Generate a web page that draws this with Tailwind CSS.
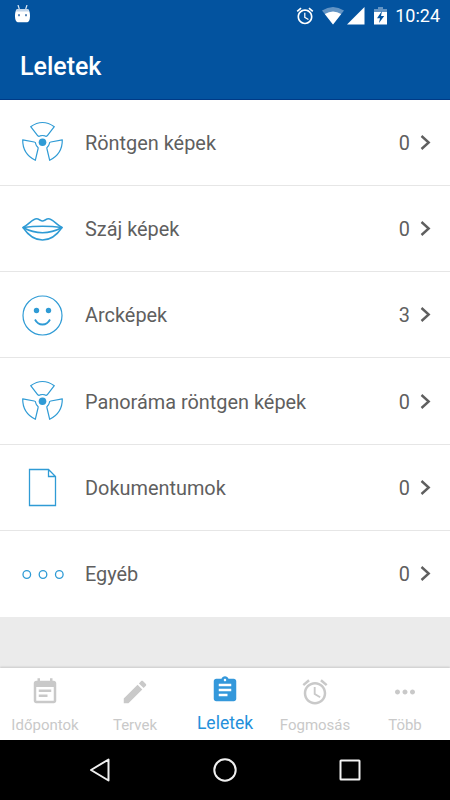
<!DOCTYPE html>
<html lang="hu">
<head>
  <meta charset="UTF-8" />
  <meta name="viewport" content="width=device-width, initial-scale=1.0"/>
  <title>Leletek</title>
  <script src="https://cdn.jsdelivr.net/npm/@tailwindcss/browser@4"></script>
</head>
<body class="bg-black font-['Roboto',sans-serif]">
  <div class="w-[450px] h-[800px] flex flex-col overflow-hidden bg-[#ebebeb]">

    <header class="h-[100px] shrink-0 bg-[#03539f] border-b border-[#003a86] text-white">
      <!-- Status bar -->
      <div class="h-8 flex items-center justify-between pl-[14px] pr-[10px]">
        <svg class="w-[17px] h-[18px] -mt-1" viewBox="0 0 17 18">
          <path d="M4 0l1.300 4M13 0l-1.300 4" stroke="#dfe9f4" stroke-width="1.200"/>
          <path d="M3 4h11c1.300 1.500 2 3.500 2 6.500 0 2-.2 4-1 5.500-.6 1-1.500 1.300-2.500 1.300h-8C3.500 17.300 2.600 17 2 16c-.8-1.500-1-3.500-1-5.500C1 7.500 1.700 5.500 3 4z" fill="#fff"/>
          <path d="M3 4h11l1.200 2.600H1.800z" fill="#c3d6ea"/>
          <rect x="4" y="9.200" width="2" height="2" fill="#5a87b9"/><rect x="11" y="9.200" width="2" height="2" fill="#5a87b9"/>
        </svg>
        <div class="flex items-center">
          <svg class="w-[20px] h-[20px] mr-[7px] -mt-px" viewBox="0 0 24 24" fill="#fff">
            <path d="M22 5.720l-4.600-3.860-1.290 1.530 4.600 3.860L22 5.720zM7.880 3.390L6.600 1.860 2 5.710l1.290 1.530 4.590-3.850zM12.500 8H11v6l4.750 2.850.75-1.230-4-2.370V8zM12 4c-4.970 0-9 4.030-9 9s4.020 9 9 9c4.970 0 9-4.030 9-9s-4.030-9-9-9zm0 16c-3.870 0-7-3.130-7-7s3.130-7 7-7 7 3.130 7 7-3.130 7-7 7z"/>
          </svg>
          <svg class="w-[22px] h-[18px] mr-[3px] -mt-px" viewBox="0 0 22 18">
            <path d="M0 3.500Q11-3.500 22 3.500L11 17.500z" fill="#6394c4"/>
            <path d="M2.800 7Q11 2 19.200 7L11 17.500z" fill="#fff"/>
          </svg>
          <svg class="w-[18px] h-[18px] mr-[9px] -mt-px" viewBox="0 0 18 18"><path d="M0 17.500L17.500 0V17.500z" fill="#fff"/></svg>
          <svg class="w-[13px] h-[18px] mr-[8px] -mt-px" viewBox="0 0 13 18">
            <path d="M4 0h5v2h4v4H0V2h4z" fill="#6394c4"/>
            <path d="M0 5h13v12.500H0z" fill="#fff"/>
            <path d="M8 4L3 11.200h3L5 16l5.200-7H7z" fill="#03539f"/>
          </svg>
          <span class="text-[18px] leading-8">10:24</span>
        </div>
      </div>
      <h1 class="pl-5 pt-[17px] text-[25px] leading-9 font-medium">Leletek</h1>
    </header>

    <main class="h-[517px] shrink-0 grid grid-rows-6 bg-white text-[19.9px] text-[#5f5f5f]">
      <div class="flex items-center pl-[21px] pr-[19px] border-b border-[#e6e6e6]">
        <svg class="w-[43px] h-[43px]" viewBox="0 0 43 43" fill="none" stroke="#2f9bd5" stroke-width="1.200" stroke-linejoin="round">
          <path d="M9.700 5.700Q21.500-2.700 33.300 5.700L26.200 14.800Q25 15.800 24 14.800Q21.500 14.200 19 14.800Q18 15.800 16.800 14.800z"/>
          <path d="M1.700 18.800L13.200 21Q14.800 21.300 14.600 22.500Q15 24.500 16.600 26Q17.600 26.800 17 28L14.300 39.300Q1.500 33 1.700 18.800z"/>
          <path d="M41.300 18.800L29.800 21Q28.200 21.300 28.400 22.500Q28 24.500 26.400 26Q25.400 26.800 26 28L28.700 39.300Q41.500 33 41.300 18.800z"/>
          <circle cx="21.500" cy="21.200" r="3.800" fill="#2f9bd5" stroke="none"/>
        </svg>
        <span class="ml-[21px] pt-[3px]">Röntgen képek</span>
        <span class="ml-auto pt-[3px]">0</span>
        <svg class="ml-[10px] w-[11px] h-[16px]" viewBox="0 0 11 16" fill="none" stroke="#5f5f5f" stroke-width="2.400"><path d="M1.500 1L8.700 7.500L1.500 14"/></svg>
      </div>
      <div class="flex items-center pt-px pl-[21px] pr-[19px] border-b border-[#e6e6e6]">
        <svg class="w-[43px] h-[43px]" viewBox="0 0 43 43" fill="none" stroke="#2f9bd5" stroke-width="1.500" stroke-linejoin="round">
          <path d="M2 19.500C8 16.500 11.500 10.800 15.500 10.800C18 10.800 19.500 13 21.500 13S25 10.800 27.500 10.800C31.500 10.800 35 16.500 41 19.500C35 28.500 28.500 32 21.500 32S8 28.500 2 19.500z"/>
          <path d="M2 19.500Q21.500 17.200 41 19.500Q21.500 30 2 19.500z"/>
        </svg>
        <span class="ml-[21px] pt-0.5">Száj képek</span>
        <span class="ml-auto pt-0.5">0</span>
        <svg class="ml-[10px] w-[11px] h-[16px]" viewBox="0 0 11 16" fill="none" stroke="#5f5f5f" stroke-width="2.400"><path d="M1.500 1L8.700 7.500L1.500 14"/></svg>
      </div>
      <div class="flex items-center pt-px pl-[21px] pr-[19px] border-b border-[#e6e6e6]">
        <svg class="w-[43px] h-[43px]" viewBox="0 0 43 43" fill="none" stroke="#2f9bd5">
          <circle cx="21.500" cy="21.500" r="19.500" stroke-width="1.200"/>
          <circle cx="15.500" cy="16.500" r="2.700" fill="#2f9bd5" stroke="none"/>
          <circle cx="27.500" cy="16.500" r="2.700" fill="#2f9bd5" stroke="none"/>
          <path d="M14 25.500Q16.500 30.500 21.500 30.500T29 25.500" stroke-width="1.800"/>
        </svg>
        <span class="ml-[21px] pt-0.5">Arcképek</span>
        <span class="ml-auto pt-0.5">3</span>
        <svg class="ml-[10px] w-[11px] h-[16px]" viewBox="0 0 11 16" fill="none" stroke="#5f5f5f" stroke-width="2.400"><path d="M1.500 1L8.700 7.500L1.500 14"/></svg>
      </div>
      <div class="flex items-center pt-px pl-[21px] pr-[19px] border-b border-[#e6e6e6]">
        <svg class="w-[43px] h-[43px]" viewBox="0 0 43 43" fill="none" stroke="#2f9bd5" stroke-width="1.200" stroke-linejoin="round">
          <path d="M9.700 5.700Q21.500-2.700 33.300 5.700L26.200 14.800Q25 15.800 24 14.800Q21.500 14.200 19 14.800Q18 15.800 16.800 14.800z"/>
          <path d="M1.700 18.800L13.200 21Q14.800 21.300 14.600 22.500Q15 24.500 16.600 26Q17.600 26.800 17 28L14.300 39.300Q1.500 33 1.700 18.800z"/>
          <path d="M41.300 18.800L29.800 21Q28.200 21.300 28.400 22.500Q28 24.500 26.400 26Q25.400 26.800 26 28L28.700 39.300Q41.500 33 41.300 18.800z"/>
          <circle cx="21.500" cy="21.200" r="3.800" fill="#2f9bd5" stroke="none"/>
        </svg>
        <span class="ml-[21px] pt-0.5">Panoráma röntgen képek</span>
        <span class="ml-auto pt-0.5">0</span>
        <svg class="ml-[10px] w-[11px] h-[16px]" viewBox="0 0 11 16" fill="none" stroke="#5f5f5f" stroke-width="2.400"><path d="M1.500 1L8.700 7.500L1.500 14"/></svg>
      </div>
      <div class="flex items-center pt-px pl-[21px] pr-[19px] border-b border-[#e6e6e6]">
        <svg class="w-[43px] h-[43px]" viewBox="0 0 43 43" fill="none" stroke="#2f9bd5" stroke-width="1.300">
          <path d="M8.500 3.500H27.500L34.500 10.500V39.500H8.500zM27.500 3.500V10.500H34.500"/>
        </svg>
        <span class="ml-[21px] pt-0.5">Dokumentumok</span>
        <span class="ml-auto pt-0.5">0</span>
        <svg class="ml-[10px] w-[11px] h-[16px]" viewBox="0 0 11 16" fill="none" stroke="#5f5f5f" stroke-width="2.400"><path d="M1.500 1L8.700 7.500L1.500 14"/></svg>
      </div>
      <div class="flex items-center pt-px pl-[21px] pr-[19px]">
        <svg class="w-[43px] h-[43px]" viewBox="0 0 43 43" fill="none" stroke="#2f9bd5" stroke-width="1.300">
          <circle cx="5.800" cy="21.500" r="3.800"/><circle cx="22" cy="21.500" r="3.800"/><circle cx="38.300" cy="21.500" r="3.800"/>
        </svg>
        <span class="ml-[21px] pt-0.5">Egyéb</span>
        <span class="ml-auto pt-0.5">0</span>
        <svg class="ml-[10px] w-[11px] h-[16px]" viewBox="0 0 11 16" fill="none" stroke="#5f5f5f" stroke-width="2.400"><path d="M1.500 1L8.700 7.500L1.500 14"/></svg>
      </div>
    </main>

    <!-- Bottom tabs -->
    <nav class="mt-auto h-[72px] shrink-0 grid grid-cols-5 bg-white shadow-[0_-1px_2px_rgba(0,0,0,0.15)] text-[15px] leading-5 text-[#c9c9c9]">
      <div class="flex flex-col items-center pt-[9px]">
        <svg class="w-[30px] h-[30px]" viewBox="0 0 24 24" fill="currentColor"><path d="M17 10H7v2h10v-2zm2-7h-1V1h-2v2H8V1H6v2H5c-1.110 0-1.990.9-1.990 2L3 19c0 1.100.89 2 2 2h14c1.100 0 2-.9 2-2V5c0-1.100-.9-2-2-2zm0 16H5V8h14v11zm-5-5H7v2h7v-2z"/></svg>
        <span class="mt-2 whitespace-nowrap">Időpontok</span>
      </div>
      <div class="flex flex-col items-center pt-[9px]">
        <svg class="w-[30px] h-[30px]" viewBox="0 0 24 24" fill="currentColor"><path d="M3 17.250V21h3.750L17.810 9.940l-3.750-3.750L3 17.250zM20.710 7.040c.39-.39.39-1.020 0-1.410l-2.340-2.340c-.39-.39-1.020-.39-1.410 0l-1.830 1.830 3.750 3.750 1.830-1.830z"/></svg>
        <span class="mt-2">Tervek</span>
      </div>
      <div class="flex flex-col items-center pt-[7px] text-[17.5px] text-[#2490db]">
        <svg class="w-[30px] h-[30px] text-[#3498db]" viewBox="0 0 24 24" fill="currentColor"><path d="M19 3h-4.180C14.400 1.840 13.300 1 12 1c-1.300 0-2.400.84-2.820 2H5c-1.100 0-2 .9-2 2v14c0 1.100.9 2 2 2h14c1.100 0 2-.9 2-2V5c0-1.100-.9-2-2-2zm-7 0c.55 0 1 .45 1 1s-.45 1-1 1-1-.45-1-1 .45-1 1-1zm2 14H7v-2h7v2zm3-4H7v-2h10v2zm0-4H7V7h10v2z"/></svg>
        <span class="mt-2">Leletek</span>
      </div>
      <div class="flex flex-col items-center pt-[9px]">
        <svg class="w-[30px] h-[30px]" viewBox="0 0 24 24" fill="currentColor"><path d="M22 5.720l-4.600-3.860-1.290 1.530 4.600 3.860L22 5.720zM7.880 3.390L6.600 1.860 2 5.710l1.290 1.530 4.590-3.850zM12.500 8H11v6l4.750 2.850.75-1.230-4-2.370V8zM12 4c-4.970 0-9 4.030-9 9s4.020 9 9 9c4.970 0 9-4.030 9-9s-4.030-9-9-9zm0 16c-3.870 0-7-3.130-7-7s3.130-7 7-7 7 3.130 7 7-3.130 7-7 7z"/></svg>
        <span class="mt-2">Fogmosás</span>
      </div>
      <div class="flex flex-col items-center pt-[9px]">
        <svg class="w-[30px] h-[30px]" viewBox="0 0 24 24" fill="currentColor"><path d="M6 10c-1.100 0-2 .9-2 2s.9 2 2 2 2-.9 2-2-.9-2-2-2zm12 0c-1.100 0-2 .9-2 2s.9 2 2 2 2-.9 2-2-.9-2-2-2zm-6 0c-1.100 0-2 .9-2 2s.9 2 2 2 2-.9 2-2-.9-2-2-2z"/></svg>
        <span class="mt-2">Több</span>
      </div>
    </nav>

    <!-- System navigation -->
    <div class="h-[60px] shrink-0 flex items-center justify-between px-[87px] bg-black">
      <svg class="w-[26px] h-[26px]" viewBox="0 0 26 26" fill="none" stroke="#f0f0f0" stroke-width="2" stroke-linejoin="round"><path d="M21.500 2.500V23.500L4 13z"/></svg>
      <svg class="w-[26px] h-[26px]" viewBox="0 0 26 26" fill="none" stroke="#f0f0f0" stroke-width="2"><circle cx="13" cy="13" r="10.700"/></svg>
      <svg class="w-[26px] h-[26px]" viewBox="0 0 26 26" fill="none" stroke="#f0f0f0" stroke-width="2"><rect x="3.500" y="3.500" width="19" height="19" rx="0.500"/></svg>
    </div>
  </div>
</body>
</html>
